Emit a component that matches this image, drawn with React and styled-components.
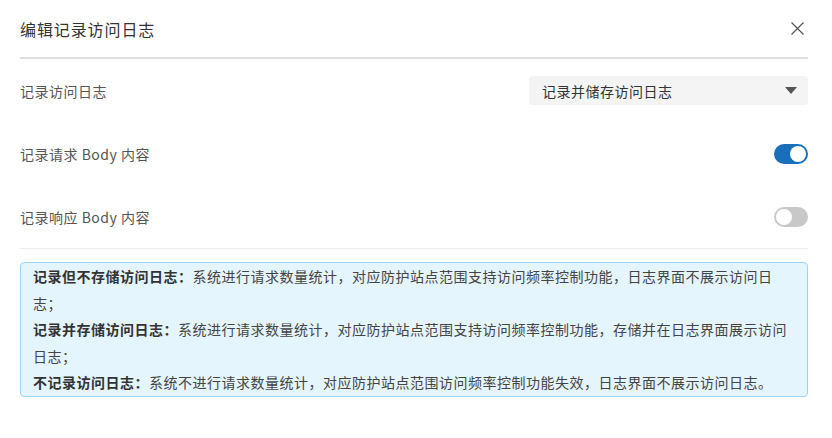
import React, { useState } from "react";
import styled, { createGlobalStyle } from "styled-components";

const Global = createGlobalStyle`
    html, body {
        margin: 0;
        padding: 0;
        background: #fff;
    }
    body {
        font-family: "Noto Sans CJK SC", "Noto Sans", "Liberation Sans", sans-serif;
        color: #333;
    }
`;

const Dialog = styled.div`
    width: 832px;
    height: 438px;
    box-sizing: border-box;
    padding: 0 24px 0 20px;
    background: #fff;
`;

const Header = styled.div`
    display: flex;
    align-items: center;
    justify-content: space-between;
    height: 57px;
    border-bottom: 2px solid #dedede;
`;

const Title = styled.h2`
    margin: 0;
    font-size: 16px;
    font-weight: 400;
    letter-spacing: 0.9px;
    color: #333;
    line-height: 20px;
`;

const Close = styled.button`
    border: 0;
    background: none;
    padding: 0;
    width: 14px;
    height: 14px;
    display: flex;
    align-items: center;
    justify-content: center;
    margin-right: 4px;
    cursor: pointer;
`;

const Row = styled.div`
    display: flex;
    align-items: center;
    justify-content: space-between;
    height: 63px;
`;

const Label = styled.span`
    font-size: 14px;
    letter-spacing: 0.5px;
    color: #555;
    line-height: 20px;
`;

const Select = styled.div`
    width: 279px;
    height: 29px;
    box-sizing: border-box;
    background: #f4f4f4;
    border-radius: 4px;
    display: flex;
    align-items: center;
    justify-content: space-between;
    padding: 0 11px 0 13px;
    font-size: 14px;
    letter-spacing: 0.5px;
    color: #333;
`;

const Caret = styled.span`
    width: 0;
    height: 0;
    border-left: 6px solid transparent;
    border-right: 6px solid transparent;
    border-top: 7px solid #555;
`;

const Switch = styled.button`
    width: 34px;
    height: 20px;
    border: 0;
    padding: 2px;
    border-radius: 10px;
    background: ${p => (p.on ? "#1a6fbd" : "#c8c8c8")};
    display: flex;
    justify-content: ${p => (p.on ? "flex-end" : "flex-start")};
    align-items: center;
    cursor: pointer;
    box-sizing: border-box;
`;

const Knob = styled.span`
    width: 16px;
    height: 16px;
    border-radius: 50%;
    background: #fff;
`;

const Divider = styled.div`
    height: 1px;
    background: #ececec;
    margin-bottom: 13px;
`;

const Info = styled.div`
    background: #e5f5fe;
    border: 1px solid #9dd3f6;
    border-radius: 4px;
    padding: 0 12px;
    font-size: 14px;
    letter-spacing: 0.5px;
    line-height: 26.6px;
    color: #444;
`;

const Item = styled.div`
    b {
        font-weight: 700;
        color: #333;
    }
`;

const notes = [
    ["记录但不存储访问日志：", "系统进行请求数量统计，对应防护站点范围支持访问频率控制功能，日志界面不展示访问日志；"],
    ["记录并存储访问日志：", "系统进行请求数量统计，对应防护站点范围支持访问频率控制功能，存储并在日志界面展示访问日志；"],
    ["不记录访问日志：", "系统不进行请求数量统计，对应防护站点范围访问频率控制功能失效，日志界面不展示访问日志。"],
];

export default function App() {
    const [reqBody, setReqBody] = useState(true);
    const [resBody, setResBody] = useState(false);

    return (
        <>
            <Global />
            <Dialog>
                <Header>
                    <Title>编辑记录访问日志</Title>
                    <Close aria-label="关闭">
                        <svg width="13" height="13" viewBox="0 0 13 13">
                            <path d="M0.5 0.5 L12.5 12.5 M12.5 0.5 L0.5 12.5" stroke="#555" strokeWidth="1.2" fill="none" />
                        </svg>
                    </Close>
                </Header>
                <Row>
                    <Label>记录访问日志</Label>
                    <Select>
                        <span>记录并储存访问日志</span>
                        <Caret />
                    </Select>
                </Row>
                <Row>
                    <Label>记录请求 Body 内容</Label>
                    <Switch on={reqBody ? 1 : 0} onClick={() => setReqBody(!reqBody)}>
                        <Knob />
                    </Switch>
                </Row>
                <Row>
                    <Label>记录响应 Body 内容</Label>
                    <Switch on={resBody ? 1 : 0} onClick={() => setResBody(!resBody)}>
                        <Knob />
                    </Switch>
                </Row>
                <Divider />
                <Info>
                    {notes.map(([head, text]) => (
                        <Item key={head}>
                            <b>{head}</b>
                            {text}
                        </Item>
                    ))}
                </Info>
            </Dialog>
        </>
    );
}
